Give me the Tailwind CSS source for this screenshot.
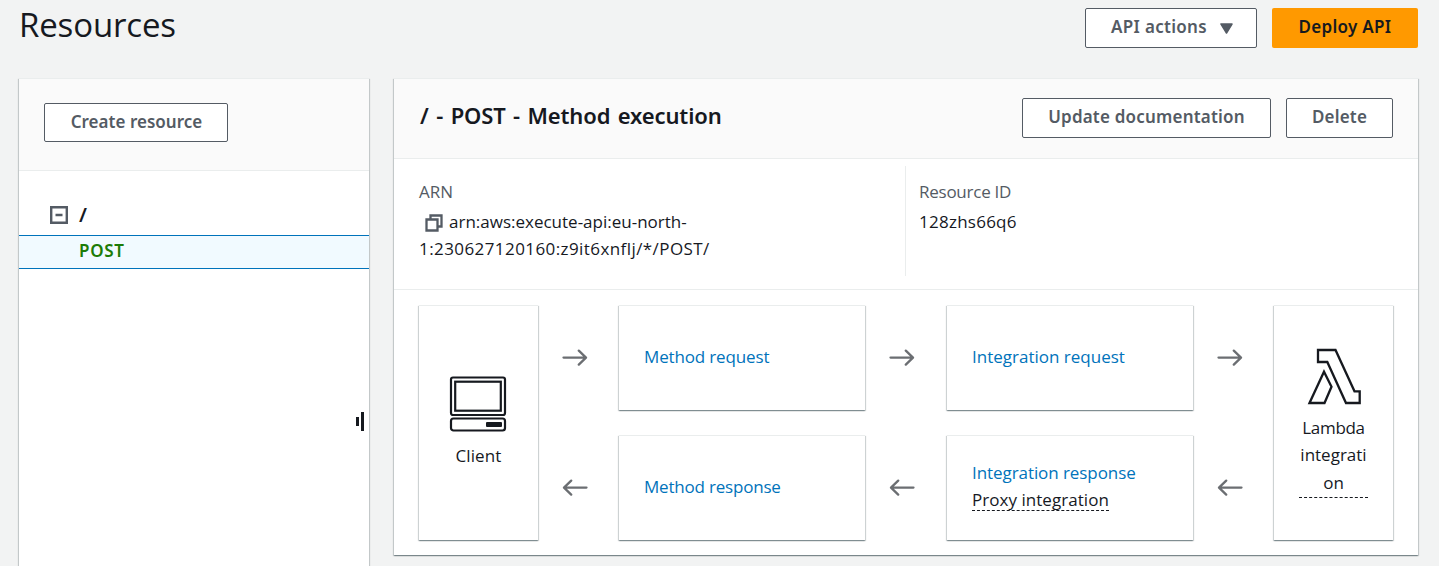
<!DOCTYPE html>
<html lang="en">
<head>
<meta charset="utf-8">
<title>Resources</title>
<script src="https://cdn.jsdelivr.net/npm/@tailwindcss/browser@4"></script>
</head>
<body class="h-[566px] overflow-hidden bg-[#f2f3f3] font-['Open_Sans',sans-serif] text-[17px] leading-[27px] text-[#16191f]">
<svg class="hidden">
  <symbol id="right" viewBox="0 0 26 18"><path d="M1.500 8.600H24M16.800 1.600l7.200 7-7.200 7" fill="none" stroke="#6b6e72" stroke-width="2.300" stroke-linecap="round" stroke-linejoin="round"/></symbol>
  <symbol id="left" viewBox="0 0 26 18"><path d="M24.500 8.600H2M9.200 1.600L2 8.600l7.200 7" fill="none" stroke="#6b6e72" stroke-width="2.300" stroke-linecap="round" stroke-linejoin="round"/></symbol>
</svg>

<header class="flex h-[78px] items-start justify-between pl-[19px] pr-[21px]">
  <h1 class="pt-[3px] text-[33px] leading-[44px] tracking-[-0.15px]">Resources</h1>
  <div class="flex gap-[15px] pt-2 font-['Noto_Sans',sans-serif] font-semibold">
    <button class="flex h-10 w-[172px] items-center justify-center gap-[13px] rounded-[2px] border border-[#545b64] bg-white pb-[3px] pl-[2px] text-[#545b64]"><span class="tracking-[0.3px]">API actions</span>
      <svg class="mt-[3px] h-[11px] w-[13px]" viewBox="0 0 13 11"><path d="M1 1h11L6.500 10z" fill="#545b64" stroke="#545b64" stroke-width="1.500" stroke-linejoin="round"/></svg>
    </button>
    <button class="h-10 w-[146px] rounded-[2px] bg-[#ff9900] pb-[3px] tracking-[0.3px]">Deploy API</button>
  </div>
</header>

<main class="flex items-start gap-[25px] pl-[19px]">
  <aside class="flex h-[488px] w-[350px] flex-col border-t border-[#eaeded] bg-white shadow-[0_1px_1px_0_rgba(0,28,36,0.3),1px_1px_1px_0_rgba(0,28,36,0.15),-1px_1px_1px_0_rgba(0,28,36,0.15)]">
    <div class="h-[92px] shrink-0 border-b border-[#eaeded] bg-[#fafafa] pl-[25px] pt-[24px]">
      <button class="h-[39px] w-[184px] rounded-[2px] border border-[#545b64] bg-white pb-[2px] pl-px font-['Noto_Sans',sans-serif] font-semibold tracking-[0.03px] text-[#545b64]">Create resource</button>
    </div>
    <div class="flex h-[64px] shrink-0 items-end pb-[7px] pl-[31px]">
      <svg class="mb-[4px] h-[18px] w-[18px]" viewBox="0 0 18 18" fill="none" stroke="#545b64" stroke-width="2.400"><path d="M1.200 1.200h15.600v15.600H1.200zM5.500 9h7"/></svg>
      <span class="pl-[11px] font-['Noto_Sans',sans-serif] text-[20px] font-semibold">/</span>
    </div>
    <div class="h-[34px] shrink-0 border-y border-[#0073bb] bg-[#f1faff] pl-[60px] pt-[1px] font-['Noto_Sans',sans-serif] font-semibold tracking-[0.7px] text-[#1d7c07]">POST</div>
    <div class="flex items-center justify-end gap-[2px] pr-[5px] pt-[143px]">
      <span class="h-[9px] w-[3px] bg-[#16191f]"></span>
      <span class="h-[19px] w-[3px] bg-[#16191f]"></span>
    </div>
  </aside>

  <section class="h-[477px] w-[1024px] border-t border-[#eaeded] bg-white shadow-[0_1px_1px_0_rgba(0,28,36,0.3),1px_1px_1px_0_rgba(0,28,36,0.15),-1px_1px_1px_0_rgba(0,28,36,0.15)]">
    <div class="flex h-[80px] items-start justify-between border-b border-[#eaeded] bg-[#fafafa] pl-[26px] pr-[25px] pt-[19px]">
      <h2 class="pt-[3px] font-['Noto_Sans',sans-serif] text-[22px] font-semibold leading-[28px] tracking-[-0.15px] [word-spacing:2px]">/ - POST - Method execution</h2>
      <div class="flex gap-[15px] font-['Noto_Sans',sans-serif] font-semibold text-[#545b64]">
        <button class="h-10 w-[249px] rounded-[2px] border border-[#545b64] bg-white pb-[3px] tracking-[0.2px]">Update documentation</button>
        <button class="h-10 w-[107px] rounded-[2px] border border-[#545b64] bg-white pb-[3px] tracking-[0.2px]">Delete</button>
      </div>
    </div>

    <div class="flex h-[131px] border-b border-[#eaeded] pt-[7px]">
      <div class="h-[110px] w-[512px] border-r border-[#eaeded] pl-[25px] pt-[12px]">
        <p class="text-[#545b64]">ARN</p>
        <div class="flex items-center pl-[6px] pt-[3px]">
          <svg class="mt-[2px] h-[18px] w-[18px]" viewBox="0 0 18 18" fill="none" stroke="#545b64" stroke-width="2.300"><path d="M1.500 5.500h11v11h-11zM5.500 5V1.500h11v11H13"/></svg>
          <span class="pl-[6px]">arn:aws:execute-api:eu-north-</span>
        </div>
        <p class="tracking-[0.42px]">1:230627120160:z9it6xnflj/*/POST/</p>
      </div>
      <div class="pl-[13px] pt-[12px]">
        <p class="tracking-[-0.25px] text-[#545b64]">Resource ID</p>
        <p class="pt-[3px] tracking-[0.25px]">128zhs66q6</p>
      </div>
    </div>

    <div class="flex pl-[25px] pt-[15px]">
      <div class="flex h-[235px] w-[119px] flex-col items-center border-t border-[#eaeded] pt-[70px] shadow-[0_1px_1px_0_rgba(0,28,36,0.3),1px_1px_1px_0_rgba(0,28,36,0.15),-1px_1px_1px_0_rgba(0,28,36,0.15)]">
        <svg class="mr-[2px] h-[57px] w-[58px]" viewBox="0 0 58 57" fill="none" stroke="#16191f" stroke-width="2.200"><rect x="2" y="1.500" width="54" height="37.500" rx="2"/><rect x="6.200" y="5.700" width="45.600" height="29"/><rect x="2" y="42.500" width="54" height="12" rx="2.500"/><rect x="37" y="46" width="16" height="5" rx="1" fill="#16191f" stroke="none"/></svg>
        <span class="pt-[9px] tracking-[0.1px]">Client</span>
      </div>
      <div class="flex w-[81px] flex-col items-center gap-[112px] pt-[44px] pr-[7px]">
        <svg class="h-[18px] w-[26px]"><use href="#right"/></svg>
        <svg class="h-[18px] w-[26px]"><use href="#left"/></svg>
      </div>
      <div class="flex flex-col gap-[25px] text-[#0073bb]">
        <div class="h-[105px] w-[246px] border-t border-[#eaeded] pl-[25px] pt-[37px] tracking-[-0.15px] shadow-[0_1px_1px_0_rgba(0,28,36,0.3),1px_1px_1px_0_rgba(0,28,36,0.15),-1px_1px_1px_0_rgba(0,28,36,0.15)]">Method request</div>
        <div class="h-[105px] w-[246px] border-t border-[#eaeded] pl-[25px] pt-[37px] tracking-[-0.2px] shadow-[0_1px_1px_0_rgba(0,28,36,0.3),1px_1px_1px_0_rgba(0,28,36,0.15),-1px_1px_1px_0_rgba(0,28,36,0.15)]">Method response</div>
      </div>
      <div class="flex w-[82px] flex-col items-center gap-[112px] pt-[44px] pr-[8px]">
        <svg class="h-[18px] w-[26px]"><use href="#right"/></svg>
        <svg class="h-[18px] w-[26px]"><use href="#left"/></svg>
      </div>
      <div class="flex flex-col gap-[25px] text-[#0073bb]">
        <div class="h-[105px] w-[246px] border-t border-[#eaeded] pl-[25px] pt-[37px] shadow-[0_1px_1px_0_rgba(0,28,36,0.3),1px_1px_1px_0_rgba(0,28,36,0.15),-1px_1px_1px_0_rgba(0,28,36,0.15)]">Integration request</div>
        <div class="flex h-[105px] w-[246px] flex-col items-start border-t border-[#eaeded] pl-[25px] pt-[23px] shadow-[0_1px_1px_0_rgba(0,28,36,0.3),1px_1px_1px_0_rgba(0,28,36,0.15),-1px_1px_1px_0_rgba(0,28,36,0.15)]">
          <span class="tracking-[-0.07px]">Integration response</span>
          <span class="h-[25px] border-b border-dashed border-[#16191f] tracking-[0.04px] text-[#16191f]">Proxy integration</span>
        </div>
      </div>
      <div class="flex w-[81px] flex-col items-center gap-[112px] pt-[44px] pr-[7px]">
        <svg class="h-[18px] w-[26px]"><use href="#right"/></svg>
        <svg class="h-[18px] w-[26px]"><use href="#left"/></svg>
      </div>
      <div class="flex h-[235px] w-[119px] flex-col items-center border-t border-[#eaeded] pt-[42px] shadow-[0_1px_1px_0_rgba(0,28,36,0.3),1px_1px_1px_0_rgba(0,28,36,0.15),-1px_1px_1px_0_rgba(0,28,36,0.15)]">
        <svg class="ml-[2px] h-[57px] w-[56px]" viewBox="0 0 56 57" fill="none" stroke="#16191f" stroke-width="2.300"><path d="M11 2h17.500l19 41.300h5.200v11.700H39L20.300 14H11zM2.500 55L17 23.700l7.500 15L17.500 55z"/></svg>
        <div class="mt-[9px] h-[84px] w-[69px] border-b border-dashed border-[#16191f] text-center"><p class="tracking-[-0.3px]">Lambda</p><p>integrati</p><p class="pt-px">on</p></div>
      </div>
    </div>
  </section>
</main>
</body>
</html>
